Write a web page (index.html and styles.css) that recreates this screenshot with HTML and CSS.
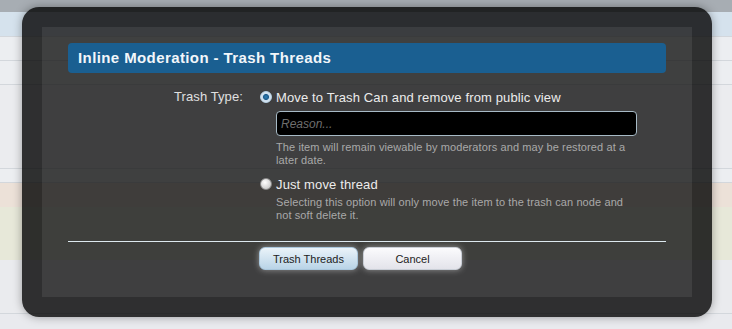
FILE: index.html
```html
<!DOCTYPE html>
<html lang="en">
<head>
  <meta charset="UTF-8">
  <title>Inline Moderation - Trash Threads</title>
  <link rel="stylesheet" href="styles.css">
</head>
<body>
  <div class="page">
    <div class="band top"></div>
    <div class="band nav"></div>
    <div class="band row"></div>
    <div class="band row"></div>
    <div class="band tall"></div>
    <div class="band row short"></div>
    <div class="band peach"></div>
    <div class="band cream"></div>
    <div class="band tall2"></div>
  </div>

  <div class="overlay">
    <div class="panel">
      <h2 class="heading">Inline Moderation - Trash Threads</h2>

      <div class="ctrl">
        <label class="ctrl-label">Trash Type:</label>
        <div class="ctrl-body">
          <div class="choice">
            <span class="radio checked"></span>
            <span class="choice-text">Move to Trash Can and remove from public view</span>
          </div>
          <input type="text" class="reason" placeholder="Reason...">
          <p class="hint">The item will remain viewable by moderators and may be restored at a later date.</p>

          <div class="choice second">
            <span class="radio"></span>
            <span class="choice-text">Just move thread</span>
          </div>
          <p class="hint last">Selecting this option will only move the item to the trash can node and not soft delete it.</p>
        </div>
      </div>

      <div class="submit">
        <button class="btn primary">Trash Threads</button>
        <button class="btn">Cancel</button>
      </div>
    </div>
  </div>
</body>
</html>
```

FILE: styles.css
```css
body {
  margin: 0;
  font-family: "Liberation Sans", Arial, sans-serif;
  background: #e9eaee;
  overflow: hidden;
}
.page {
  width: 732px;
  height: 329px;
}
.band {
  border-bottom: 1px solid #d3d7dc;
}
.band.top {
  height: 12px;
  background: #a7adb3;
  border: none;
}
.band.nav {
  height: 24px;
  background: #d5e2ed;
}
.band.row {
  height: 23px;
  background: #eceef1;
}
.band.tall {
  height: 83px;
  background: #ebecef;
}
.band.short {
  height: 13px;
}
.band.peach {
  height: 24px;
  background: #ece1d8;
  border: none;
}
.band.cream {
  height: 53px;
  background: #e7e8d9;
  border: none;
}
.band.tall2 {
  height: 53px;
  background: #eaebee;
}

.overlay {
  position: absolute;
  left: 22px;
  top: 7px;
  width: 650px;
  height: 270px;
  padding: 20px;
  border-radius: 17px;
  background: rgba(0, 0, 0, 0.8);
  box-shadow: 0 0 10px rgba(0, 0, 0, 0.35);
}
.panel {
  height: 100%;
  box-sizing: border-box;
  padding: 16px 26px 0;
  background: rgba(255, 255, 255, 0.08);
  color: #e8e8e8;
}
.heading {
  margin: 0;
  height: 30px;
  line-height: 30px;
  padding-left: 10px;
  border-radius: 4px;
  background: #1a5f91;
  color: #f2f6fa;
  font-size: 15px;
  letter-spacing: 0.4px;
  font-weight: bold;
}

.ctrl {
  display: flex;
  margin-top: 15px;
  font-size: 13px;
}
.ctrl-label {
  width: 175px;
  text-align: right;
  line-height: 18px;
  color: #e0e0e0;
  letter-spacing: 0.1px;
}
.ctrl-body {
  margin-left: 17px;
  width: 370px;
}
.choice {
  display: flex;
  align-items: center;
  height: 18px;
}
.choice.second {
  margin-top: 8px;
}
.radio {
  width: 10px;
  height: 10px;
  margin-right: 4px;
  border-radius: 50%;
  border: 1px solid #8a8a8a;
  background: radial-gradient(circle at 40% 35%, #ffffff, #cfcfcf 70%, #a9a9a9);
}
.radio.checked {
  border-color: #b9d3e6;
  background: radial-gradient(circle, #2f7fb8 0, #1e5d8c 2.6px, #c9dced 3.4px, #eef4fa 100%);
}
.choice-text {
  color: #ececec;
  letter-spacing: 0.13px;
}
.reason {
  display: block;
  box-sizing: border-box;
  width: 361px;
  height: 25px;
  margin: 5px 0 0 16px;
  padding: 0 4px;
  background: #000;
  border: 1px solid #a7bac6;
  border-radius: 4px;
  color: #ddd;
  font-family: inherit;
  font-size: 12px;
}
.reason::placeholder {
  color: #6e6e6e;
  font-style: italic;
}
.hint {
  margin: 5px 0 0 16px;
  font-size: 11px;
  line-height: 13px;
  letter-spacing: 0.1px;
  color: #a9a9a9;
}
.hint.last {
  margin-top: 3px;
}

.submit {
  display: flex;
  gap: 5px;
  margin-top: 19px;
  padding-top: 5px;
  padding-left: 191px;
  border-top: 1px solid #dde9ef;
}
.btn {
  width: 99px;
  height: 23px;
  border: 1px solid #c9ced6;
  border-radius: 6px;
  background: linear-gradient(#fbfbfd, #e3e3ea);
  box-shadow: 0 0 6px rgba(255, 255, 255, 0.45);
  color: #222;
  font-family: inherit;
  font-size: 11px;
}
.btn.primary {
  border-color: #aac7dc;
  background: linear-gradient(#eaf3f9, #b9d4e7);
}
```
